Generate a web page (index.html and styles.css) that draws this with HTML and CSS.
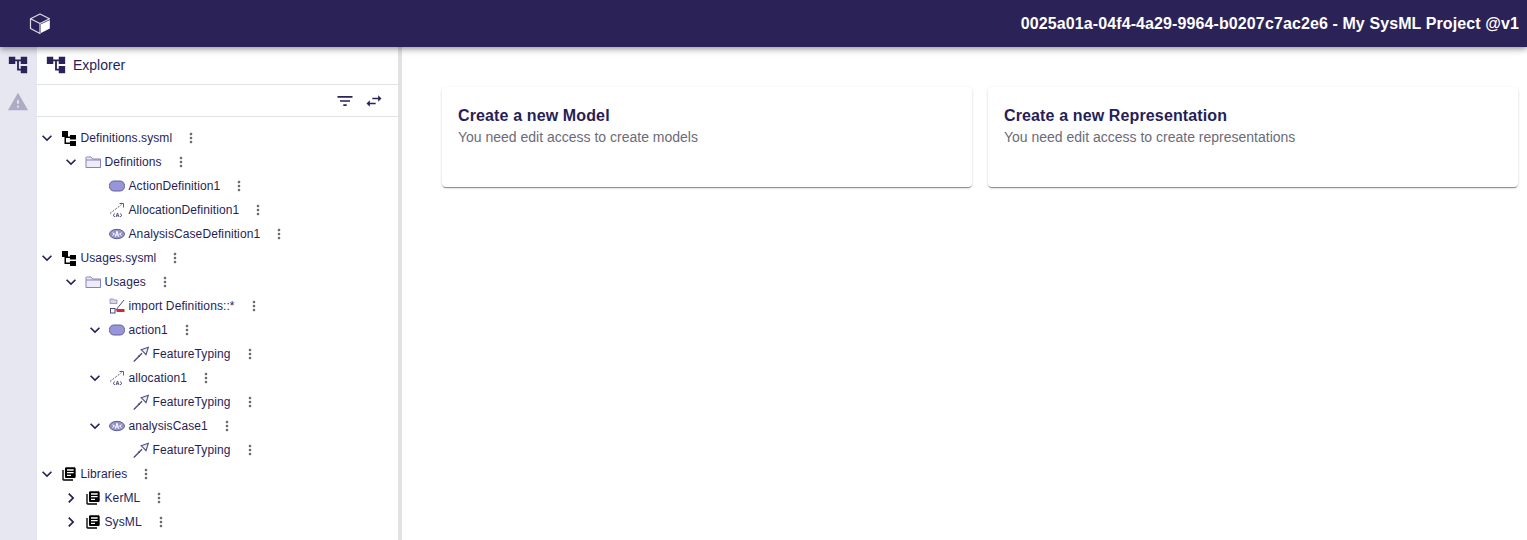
FILE: index.html
```html
<!DOCTYPE html>
<html lang="en">
<head>
<meta charset="utf-8">
<title>My SysML Project</title>
<link rel="stylesheet" href="styles.css">
</head>
<body>
<svg class="defs" width="0" height="0" aria-hidden="true">
  <defs>
    <symbol id="i-tree" viewBox="0 0 24 24"><path d="M22 11V3h-7v3H9V3H2v8h7V8h2v10h4v3h7v-8h-7v3h-2V8h2v3z"/></symbol>
    <symbol id="i-warn" viewBox="0 0 24 24"><path d="M1 21h22L12 2 1 21zm12-3h-2v-2h2v2zm0-4h-2v-4h2v4z"/></symbol>
    <symbol id="i-down" viewBox="0 0 24 24"><path d="M16.59 8.59 12 13.17 7.41 8.59 6 10l6 6 6-6z"/></symbol>
    <symbol id="i-right" viewBox="0 0 24 24"><path d="M10 6 8.59 7.41 13.17 12l-4.58 4.59L10 18l6-6z"/></symbol>
    <symbol id="i-more" viewBox="0 0 24 24"><path d="M12 8c1.1 0 2-.9 2-2s-.9-2-2-2-2 .9-2 2 .9 2 2 2zm0 2c-1.1 0-2 .9-2 2s.9 2 2 2 2-.9 2-2-.9-2-2-2zm0 6c-1.1 0-2 .9-2 2s.9 2 2 2 2-.9 2-2-.9-2-2-2z"/></symbol>
    <symbol id="i-lib" viewBox="0 0 24 24"><path d="M4 6H2v14c0 1.1.9 2 2 2h14v-2H4V6zm16-4H8c-1.1 0-2 .9-2 2v12c0 1.1.9 2 2 2h12c1.1 0 2-.9 2-2V4c0-1.1-.9-2-2-2zm-1 9H9V9h10v2zm-4 4H9v-2h6v2zm4-8H9V5h10v2z"/></symbol>
    <symbol id="i-file" viewBox="0 0 16 16"><path d="M1 1h6v6H1zM3.500 7H5v7H3.500zM3.500 6.500h6V8h-6zM3.500 12.500h6V14h-6zM9 5h6v4.500H9zM9 11h6v5H9z"/></symbol>
    <symbol id="i-folder" viewBox="0 0 16 16"><path d="M1 3.500V13.500h14.500V5H7.500L6 3H1.500z" fill="#ecebf6" stroke="#8783b5"/><path d="M1 6h14.500" stroke="#8783b5" fill="none"/></symbol>
    <symbol id="i-action" viewBox="0 0 16 16"><rect x=".5" y="3" width="15" height="10" rx="4.500" fill="#9896d8" stroke="#64619c"/></symbol>
    <symbol id="i-alloc" viewBox="0 0 16 16"><path d="M1 11.500 12.500 2.500" stroke="#5d5885" stroke-dasharray="2 1.300" fill="none"/><path d="M10.500 1.500h4V5.500" stroke="#5d5885" fill="none"/><path d="M6 11.500 4 13.300 6 15M11 11.500l2 1.800L11 15M7 15l1.500-4 1.500 4M7.500 13.800h2" stroke="#4c4775" stroke-width=".9" fill="none"/></symbol>
    <symbol id="i-case" viewBox="0 0 16 16"><ellipse cx="8" cy="8" rx="7.500" ry="4.700" fill="#9795c8" stroke="#625f96"/><path d="M3.500 9.500 5.500 8 3.500 6.800M12.500 9.500 10.500 8 12.500 6.800M6.300 10.800 8 5.200l1.700 5.600M6.900 9h2.200" stroke="#fff" fill="none"/></symbol>
    <symbol id="i-typing" viewBox="0 0 16 16"><path d="M.8 15.500 9 7.300" stroke="#4f4a7c" stroke-width="1.400" fill="none"/><path d="M8.200 3.800 15.300 1.300 13 8.600 10.400 5.800z" fill="#f1f0fa" stroke="#4f4a7c" stroke-width="1.100"/><path d="M5.500 9.500l1.500 1.500" stroke="#4f4a7c"/></symbol>
    <symbol id="i-import" viewBox="0 0 16 16"><path d="M1 1h3.500l.8 1H8v3.500H1z" fill="#d8d7e8" stroke="#8d8aa8" stroke-width=".8"/><path d="M6.500 12.500 15 2" stroke="#4f4a7c"/><rect x="1.500" y="10.500" width="4.500" height="4.500" fill="#fff" stroke="#4f4a7c"/><rect x="7.500" y="11" width="8" height="3" rx=".5" fill="#d9252f"/></symbol>
  </defs>
</svg>

<header class="topbar">
  <svg class="logo" viewBox="0 0 24 24" aria-label="SysON logo">
    <path d="M12 2 21.500 6.700 12 11.500 2.500 6.700z" fill="none" stroke="#dcdbe6" stroke-width="1.200" stroke-linejoin="round"/>
    <path d="M2.500 6.700V16.500L12 21.500V11.500" fill="none" stroke="#dcdbe6" stroke-width="1.200" stroke-linejoin="round"/>
    <path d="M13 12.300 21.800 8V16.500L13 21z" fill="#fff"/>
  </svg>
  <h1 class="project-title">0025a01a-04f4-4a29-9964-b0207c7ac2e6 - My SysML Project @v1</h1>
</header>

<div class="workspace">
  <nav class="rail">
    <svg class="rail-icon rail-icon-active"><use href="#i-tree"/></svg>
    <svg class="rail-icon rail-icon-muted"><use href="#i-warn"/></svg>
  </nav>

  <aside class="explorer">
    <div class="explorer-head">
      <svg class="head-icon"><use href="#i-tree"/></svg>
      <span class="explorer-title">Explorer</span>
    </div>
    <div class="explorer-tools">
      <svg class="tool-icon" viewBox="0 0 24 24"><path d="M10 18h4v-2h-4v2zM3 6v2h18V6H3zm3 7h12v-2H6v2z"/></svg>
      <svg class="tool-icon" viewBox="0 0 24 24"><path d="M6.990 11 3 15l3.990 4v-3H14v-2H6.990v-3zM21 9l-3.990-4v3H10v2h7.010v3L21 9z"/></svg>
    </div>
    <ul class="tree">
      <li class="row lv0"><svg class="chev"><use href="#i-down"/></svg><svg class="node"><use href="#i-file"/></svg><span class="label">Definitions.sysml</span><svg class="more"><use href="#i-more"/></svg></li>
      <li class="row lv1"><svg class="chev"><use href="#i-down"/></svg><svg class="node"><use href="#i-folder"/></svg><span class="label">Definitions</span><svg class="more"><use href="#i-more"/></svg></li>
      <li class="row lv2"><span class="chev"></span><svg class="node"><use href="#i-action"/></svg><span class="label">ActionDefinition1</span><svg class="more"><use href="#i-more"/></svg></li>
      <li class="row lv2"><span class="chev"></span><svg class="node"><use href="#i-alloc"/></svg><span class="label">AllocationDefinition1</span><svg class="more"><use href="#i-more"/></svg></li>
      <li class="row lv2"><span class="chev"></span><svg class="node"><use href="#i-case"/></svg><span class="label">AnalysisCaseDefinition1</span><svg class="more"><use href="#i-more"/></svg></li>
      <li class="row lv0"><svg class="chev"><use href="#i-down"/></svg><svg class="node"><use href="#i-file"/></svg><span class="label">Usages.sysml</span><svg class="more"><use href="#i-more"/></svg></li>
      <li class="row lv1"><svg class="chev"><use href="#i-down"/></svg><svg class="node"><use href="#i-folder"/></svg><span class="label">Usages</span><svg class="more"><use href="#i-more"/></svg></li>
      <li class="row lv2"><span class="chev"></span><svg class="node"><use href="#i-import"/></svg><span class="label">import Definitions::*</span><svg class="more"><use href="#i-more"/></svg></li>
      <li class="row lv2"><svg class="chev"><use href="#i-down"/></svg><svg class="node"><use href="#i-action"/></svg><span class="label">action1</span><svg class="more"><use href="#i-more"/></svg></li>
      <li class="row lv3"><span class="chev"></span><svg class="node"><use href="#i-typing"/></svg><span class="label">FeatureTyping</span><svg class="more"><use href="#i-more"/></svg></li>
      <li class="row lv2"><svg class="chev"><use href="#i-down"/></svg><svg class="node"><use href="#i-alloc"/></svg><span class="label">allocation1</span><svg class="more"><use href="#i-more"/></svg></li>
      <li class="row lv3"><span class="chev"></span><svg class="node"><use href="#i-typing"/></svg><span class="label">FeatureTyping</span><svg class="more"><use href="#i-more"/></svg></li>
      <li class="row lv2"><svg class="chev"><use href="#i-down"/></svg><svg class="node"><use href="#i-case"/></svg><span class="label">analysisCase1</span><svg class="more"><use href="#i-more"/></svg></li>
      <li class="row lv3"><span class="chev"></span><svg class="node"><use href="#i-typing"/></svg><span class="label">FeatureTyping</span><svg class="more"><use href="#i-more"/></svg></li>
      <li class="row lv0"><svg class="chev"><use href="#i-down"/></svg><svg class="node node-lib"><use href="#i-lib"/></svg><span class="label">Libraries</span><svg class="more"><use href="#i-more"/></svg></li>
      <li class="row lv1"><svg class="chev"><use href="#i-right"/></svg><svg class="node node-lib"><use href="#i-lib"/></svg><span class="label">KerML</span><svg class="more"><use href="#i-more"/></svg></li>
      <li class="row lv1"><svg class="chev"><use href="#i-right"/></svg><svg class="node node-lib"><use href="#i-lib"/></svg><span class="label">SysML</span><svg class="more"><use href="#i-more"/></svg></li>
    </ul>
  </aside>

  <div class="splitter"></div>

  <main class="content">
    <section class="card">
      <h2 class="card-title">Create a new Model</h2>
      <p class="card-text">You need edit access to create models</p>
    </section>
    <section class="card">
      <h2 class="card-title">Create a new Representation</h2>
      <p class="card-text">You need edit access to create representations</p>
    </section>
  </main>
</div>
</body>
</html>
```
FILE: styles.css
```css
* { box-sizing: border-box; }

html, body {
  margin: 0;
  height: 100%;
  overflow: hidden;
}

body {
  display: flex;
  flex-direction: column;
  background: #fff;
  color: #261e58;
  font-family: "Liberation Sans", Arial, sans-serif;
}

.defs { position: absolute; }

.topbar {
  position: relative;
  z-index: 2;
  flex: 0 0 47px;
  display: flex;
  align-items: center;
  justify-content: space-between;
  padding: 0 8px 0 28px;
  background: #2b2358;
  box-shadow: 0 2px 4px -1px rgba(0,0,0,.2), 0 4px 5px 0 rgba(0,0,0,.14), 0 1px 10px 0 rgba(0,0,0,.12);
}

.logo { width: 24px; height: 24px; }

.project-title {
  margin: 0;
  color: #fff;
  font-size: 16px;
  font-weight: 700;
  line-height: 24px;
  letter-spacing: .104px;
}

.workspace {
  flex: 1;
  display: flex;
  min-height: 0;
}

.rail {
  flex: 0 0 37px;
  display: flex;
  flex-direction: column;
  align-items: center;
  gap: 15px;
  padding: 7px 2px 0 0;
  background: #e7e7f2;
}

.rail-icon { width: 22px; height: 22px; }
.rail-icon-active { fill: #2b2358; }
.rail-icon-muted { fill: #aeacc4; }

.explorer {
  flex: 0 0 361px;
  display: flex;
  flex-direction: column;
}

.explorer-head {
  flex: 0 0 38px;
  display: flex;
  align-items: center;
  gap: 6px;
  padding: 0 0 0 8px;
  border-bottom: 1px solid #e2e2e2;
}

.head-icon { width: 22px; height: 22px; fill: #2b2358; margin-top: -1px; }

.explorer-title { font-size: 14px; line-height: 20px; margin-top: -2px; }

.explorer-tools {
  flex: 0 0 32px;
  display: flex;
  align-items: center;
  justify-content: flex-end;
  gap: 9px;
  padding-right: 14px;
  border-bottom: 1px solid #e2e2e2;
}

.tool-icon { width: 20px; height: 20px; fill: #2b2358; }

.tree {
  list-style: none;
  margin: 0;
  padding: 9px 0 0;
}

.row {
  display: flex;
  align-items: center;
  height: 24px;
  font-size: 12px;
}

.lv0 { padding-left: 0; }
.lv1 { padding-left: 24px; }
.lv2 { padding-left: 48px; }
.lv3 { padding-left: 72px; }

.chev {
  flex: 0 0 20px;
  width: 20px;
  height: 20px;
  margin-right: 4px;
  fill: #261e58;
}

.node { flex: 0 0 16px; width: 16px; height: 16px; margin-right: 4px; fill: #000; }

.label { white-space: nowrap; letter-spacing: .1px; margin-left: -.5px; }

.more { flex: 0 0 16px; width: 16px; height: 16px; margin-left: 11px; fill: #6b6b6b; }

.splitter {
  flex: 0 0 4px;
  background: #e2e2e2;
}

.content {
  flex: 1;
  display: grid;
  grid-template-columns: 1fr 1fr;
  grid-auto-rows: 100px;
  gap: 16px;
  padding: 40px 9px 0 40px;
}

.card {
  padding: 16px;
  border-radius: 4px;
  background: #fff;
  box-shadow: 0 2px 1px -1px rgba(0,0,0,.28), 0 1px 1px 0 rgba(0,0,0,.18), 0 1px 3px 0 rgba(0,0,0,.14);
}

.card-title {
  margin: 0;
  height: 24px;
  font-size: 16px;
  font-weight: 700;
  line-height: 26px;
  letter-spacing: .13px;
}

.card-text {
  margin: 0;
  color: #6b6b78;
  font-size: 14px;
  line-height: 20px;
}
```
